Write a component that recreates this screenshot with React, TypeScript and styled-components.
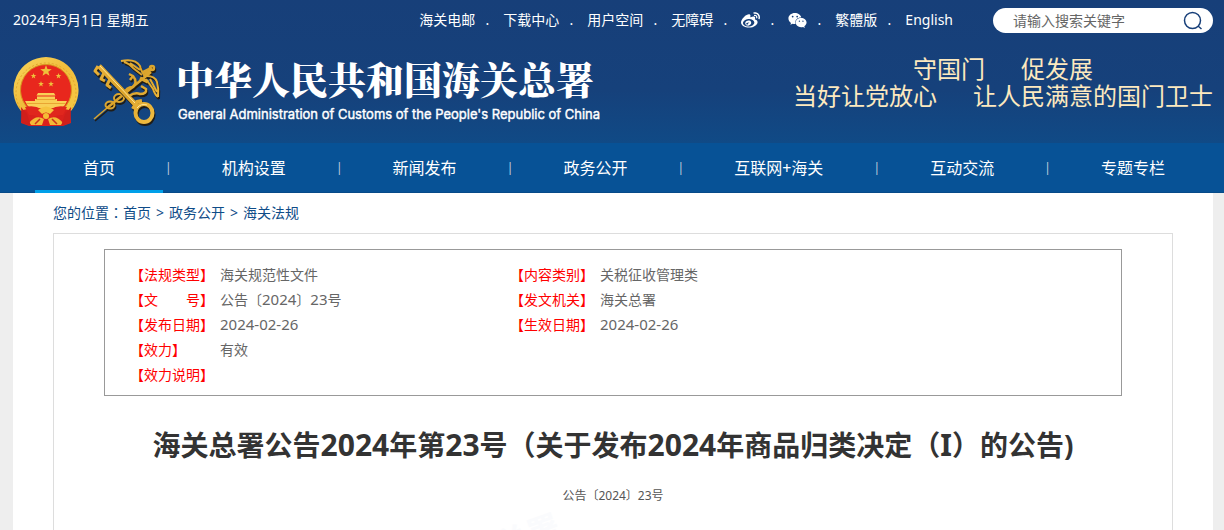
import React from "react";
import styled, { createGlobalStyle } from "styled-components";
import { FaWeibo, FaWeixin } from "react-icons/fa";

const GlobalStyle = createGlobalStyle`
  *, *::before, *::after { box-sizing: border-box; }
  body {
    margin: 0;
    background: #eeeeee;
    color: #666666;
    font-family: "Noto Sans", "Noto Sans CJK SC", sans-serif;
    font-size: 14px;
    line-height: 25px;
  }
  a { color: inherit; text-decoration: none; }
  ul, ol { list-style: none; margin: 0; padding: 0; }
`;

const Header = styled.header`
  height: 143px;
  padding: 8px 11px 0 13px;
  color: #ffffff;
  background: linear-gradient(#173f79 0, #16417b 90px, #104a86 143px);
`;

const TopBar = styled.div`
  display: flex;
  align-items: center;
  height: 25px;
`;

const Today = styled.span`
  margin-right: auto;
  line-height: 24px;
  padding-bottom: 2px;
`;

const QuickLinks = styled.ul`
  display: flex;
  align-items: center;
  margin-right: 40px;
  padding-bottom: 2px;
`;

const QuickItem = styled.li`
  display: flex;
  align-items: center;

  & + &::before {
    content: ".";
    width: 28px;
    padding-right: 4px;
    text-align: center;
  }

  svg { display: block; width: 19px; height: 19px; margin-top: 2px; }
`;

const SearchForm = styled.form`
  display: flex;
  align-items: center;
  width: 220px;
  height: 25px;
  padding: 0 10px 0 20px;
  border-radius: 13px;
  background: #ffffff;
`;

const SearchInput = styled.input`
  flex: 1;
  min-width: 0;
  height: 25px;
  padding: 0;
  border: 0;
  outline: 0;
  background: transparent;
  font: inherit;
  &::placeholder { color: #666666; opacity: 1; }
`;

const SearchButton = styled.button`
  display: flex;
  padding: 0;
  border: 0;
  background: transparent;
  color: #173f79;
  cursor: pointer;
`;

const Masthead = styled.div`
  display: flex;
  justify-content: space-between;
  align-items: flex-start;
  padding-top: 22px;
`;

const Brand = styled.a`
  display: flex;
  align-items: flex-end;
  gap: 14px;
`;

const BrandText = styled.span`
  display: flex;
  flex-direction: column;
`;

const BrandName = styled.span`
  font-family: "Noto Serif CJK SC", "Noto Sans CJK SC", serif;
  font-size: 38px;
  font-weight: 900;
  line-height: 46px;
`;

const BrandEnglish = styled.span`
  font-family: Inter, "Liberation Sans", sans-serif;
  font-size: 13px;
  font-weight: 400;
  line-height: 26px;
  padding-left: 2px;
  -webkit-text-stroke: 0.4px currentColor;
`;

const Slogan = styled.div`
  color: #fde9bf;
  font-size: 24px;
  line-height: 27px;
`;

const SloganLine = styled.div`
  display: flex;
  justify-content: center;
  gap: 36px;
`;

const Nav = styled.nav`
  height: 50px;
  padding: 0 11px 0 35px;
  border-bottom: 1px solid #064a88;
  background: #075296;
`;

const NavList = styled.ul`
  display: flex;
  justify-content: space-between;
`;

const NavSeparator = styled.li`
  color: #c3cfdd;
  font-size: 12px;
  line-height: 50px;
`;

const NavLink = styled.a<{ $active?: boolean }>`
  display: block;
  height: 50px;
  padding: 0 48px;
  border-bottom: 3px solid ${(p) => (p.$active ? "#00a0e9" : "transparent")};
  color: #ffffff;
  font-size: 16px;
  line-height: 50px;
`;

const Page = styled.main`
  margin: 0 11px 0 13px;
  padding: 0 40px;
  background: #ffffff;
`;

const Breadcrumb = styled.nav`
  padding: 7px 0 8px;
  color: #0f4c88;
`;

const Colon = styled.span`
  font-family: "Noto Sans CJK TC", sans-serif;
`;

const Crumb = styled.a`
  & + &::before {
    content: ">";
    margin: 0 5px;
  }
`;

const Article = styled.article`
  position: relative;
  min-height: 297px;
  padding: 15px 50px 0;
  border: 1px solid #dddddd;
  border-bottom: 0;
  overflow: hidden;
`;

const MetaBox = styled.div`
  padding: 12px 25px 8px;
  border: 1px solid #999999;
`;

const MetaTable = styled.table`
  width: 100%;
  border-collapse: collapse;
  table-layout: fixed;
`;

const MetaLabel = styled.th`
  width: 90px;
  height: 25px;
  padding: 0;
  color: #ff0000;
  font-weight: 400;
  text-align: left;
  white-space: pre;
`;

const MetaValue = styled.td<{ $wide?: boolean }>`
  width: ${(p) => (p.$wide ? "auto" : "290px")};
  padding: 0;
`;

const Digits = styled.span`
  font-size: 15px;
`;

const Title = styled.h1`
  margin: 28px 0 0;
  color: #333333;
  font-size: 28px;
  font-weight: 700;
  line-height: 42px;
  text-align: center;
  white-space: nowrap;
`;

const TitleDigits = styled.span`
  font-size: 30px;
`;

const DocNumber = styled.p`
  margin: 17px 0 0;
  color: #555555;
  font-size: 12px;
  text-align: center;
`;

const Watermark = styled.span`
  position: absolute;
  left: 380px;
  top: 292px;
  color: #fafbfd;
  font-size: 32px;
  font-weight: 700;
  line-height: 40px;
  transform: rotate(-20deg);
  pointer-events: none;
`;

const STAR = "0,-5 1.2,-1.6 4.8,-1.5 1.9,0.6 2.9,4 0,2 -2.9,4 -1.9,0.6 -4.8,-1.5 -1.2,-1.6";

const Emblem = () => (
  <svg width="66" height="70" viewBox="0 0 66 70" aria-hidden="true">
    <defs>
      <linearGradient id="ring" x1="0" y1="0" x2="1" y2="1">
        <stop offset="0" stopColor="#f9d65c" />
        <stop offset="0.5" stopColor="#f0bd3c" />
        <stop offset="1" stopColor="#f6c944" />
      </linearGradient>
    </defs>
    <path d="M9 46 L8 66 L16 69 H50 L58 66 L57 46 Z" fill="#d9201c" />
    <path d="M33 0 A33 33 0 0 1 58 54 Q50 50 44 54 H22 Q16 50 8 54 A33 33 0 0 1 33 0 Z" fill="url(#ring)" />
    <path d="M9 54 A30 30 0 1 1 57 54" fill="none" stroke="#e2a52f" strokeDasharray="2 2" />
    <path d="M16 52 A25.500 25.500 0 1 1 50 52 Z" fill="#e8271d" stroke="#d8941f" />
    <g fill="#efc03b">
      <polygon points={STAR} transform="translate(33 14) scale(1.2)" />
      <polygon points={STAR} transform="translate(20.500 19) scale(.6)" />
      <polygon points={STAR} transform="translate(45.500 19) scale(.6)" />
      <polygon points={STAR} transform="translate(28 27) scale(.6)" />
      <polygon points={STAR} transform="translate(38 27) scale(.6)" />
    </g>
    <path d="M25 36 H41 L42.500 38.500 H23.500 Z M24 39.500 H42 V42 H24 Z M22 42 H44 V44 H54 Q52 49 49 51 H17 Q14 49 12 44 H22 Z" fill="#f9cf55" />
    <path d="M23 42.500 H43 M13 46.500 H53" stroke="#e59a2b" strokeWidth=".8" />
    <path d="M12 50 Q22 48 28 52 L33 56 L38 52 Q44 48 54 50 L50 58 Q42 58 36 62 H30 Q24 58 16 58 Z" fill="#e0261d" />
    <path d="M25 53 Q33 46 41 53 L37 57 Q33 54 29 57 Z" fill="#f6c33e" />
    <circle cx="33" cy="59" r="3" fill="#f5bc35" />
    <path d="M16 66 Q23 57 31 62 L29 68 H18 Z M50 66 Q43 57 35 62 L37 68 H48 Z" fill="#f3b936" />
    <path d="M22 67 L27 62 M44 67 L39 62" stroke="#c9331b" strokeWidth="1.500" />
    <path d="M8 50 L14 57 L18 69 L9 66 Z M58 50 L52 57 L48 69 L57 66 Z" fill="#cf1f1b" />
  </svg>
);

const KeyDrawing = () => (
  <>
    <path d="M6 7 L42 45" strokeWidth="5" />
    <path d="M5 7 L2 12 L6 16 M11 14 L8 20 L12 22 M17 20 L14 26 L18 29" strokeWidth="3" />
    <ellipse cx="51" cy="54" rx="8.500" ry="9" strokeWidth="4" />
    <path d="M40 50 L44 43 L49 42" strokeWidth="4" />
  </>
);

const StaffDrawing = () => (
  <>
    <path d="M1 60 L14 49" strokeWidth="1.500" />
    <path d="M14 49 L58 13" strokeWidth="2.500" />
    <ellipse cx="17" cy="46" rx="4.500" ry="3.500" strokeWidth="2" />
    <ellipse cx="26" cy="39" rx="5" ry="4" strokeWidth="2" />
    <path d="M31 35 Q33 28 40 28 Q45 23 40 17 L36 15 M40 17 L37 21 M36 37 Q42 33 47 35 Q54 35 53 30 L48 27" strokeWidth="2.500" />
    <path d="M28 2 Q42 -1 47 7 Q48 13 53 17 M31 3 Q37 5 40 9 L49 16 M37 4 L47 11" strokeWidth="2" />
    <path d="M54 17 Q62 17 64 23 Q66 30 65 38 M65 38 Q62 36 60 30 L53 20 M64 33 L57 20" strokeWidth="2" />
    <path d="M47 19 L55 23 M49 14 L59 9 M51 18 L57 12" strokeWidth="3.500" />
    <circle cx="59" cy="9" r="2" strokeWidth="2.500" />
  </>
);

const CustomsKeys = () => (
  <svg width="69" height="68" viewBox="0 0 69 68" fill="none" strokeLinejoin="round" aria-hidden="true">
    <defs>
      <linearGradient id="gold" x1="0" y1="0" x2="66" y2="66" gradientUnits="userSpaceOnUse">
        <stop offset="0" stopColor="#eab23a" />
        <stop offset="0.5" stopColor="#dba42c" />
        <stop offset="1" stopColor="#f4c044" />
      </linearGradient>
    </defs>
    <g stroke="#201d17" transform="translate(1 2)"><StaffDrawing /></g>
    <g stroke="url(#gold)"><StaffDrawing /></g>
    <g stroke="#201d17" transform="translate(1 2)"><KeyDrawing /></g>
    <g stroke="url(#gold)"><KeyDrawing /></g>
    <path d="M7 7 L42 44 M44 49 Q48 44 54 46" stroke="#ffe69a" strokeWidth="1" />
  </svg>
);

const quickLinks: { label: string; icon?: React.ReactNode }[] = [
  { label: "海关电邮" },
  { label: "下载中心" },
  { label: "用户空间" },
  { label: "无障碍" },
  { label: "微博", icon: <FaWeibo /> },
  { label: "微信", icon: <FaWeixin /> },
  { label: "繁體版" },
  { label: "English" },
];

const sections = ["首页", "机构设置", "新闻发布", "政务公开", "互联网+海关", "互动交流", "专题专栏"];

const date = <Digits>2024-02-26</Digits>;
const docNumber = (
  <>公告〔<Digits>2024</Digits>〕<Digits>23</Digits>号</>
);

const metaRows: [string, React.ReactNode, string?, React.ReactNode?][] = [
  ["【法规类型】", "海关规范性文件", "【内容类别】", "关税征收管理类"],
  ["【文\u3000\u3000号】", docNumber, "【发文机关】", "海关总署"],
  ["【发布日期】", date, "【生效日期】", date],
  ["【效力】", "有效"],
  ["【效力说明】", ""],
];

export default function App() {
  return (
    <>
      <GlobalStyle />
      <Header>
        <TopBar>
          <Today>2024年3月1日 星期五</Today>
          <QuickLinks>
            {quickLinks.map(({ label, icon }) => (
              <QuickItem key={label}>
                <a href="#" aria-label={label}>{icon ?? label}</a>
              </QuickItem>
            ))}
          </QuickLinks>
          <SearchForm role="search">
            <SearchInput type="text" aria-label="搜索" placeholder="请输入搜索关键字" />
            <SearchButton type="button" aria-label="搜索">
              <svg width="20" height="20" viewBox="0 0 20 20" fill="none" stroke="currentColor" strokeWidth="1.500">
                <circle cx="9.500" cy="9.500" r="8" />
                <path d="M15 15 L18.500 18" />
              </svg>
            </SearchButton>
          </SearchForm>
        </TopBar>
        <Masthead>
          <Brand href="#">
            <Emblem />
            <CustomsKeys />
            <BrandText>
              <BrandName>中华人民共和国海关总署</BrandName>
              <BrandEnglish>General Administration of Customs of the People's Republic of China</BrandEnglish>
            </BrandText>
          </Brand>
          <Slogan>
            <SloganLine><span>守国门</span><span>促发展</span></SloganLine>
            <SloganLine><span>当好让党放心</span><span>让人民满意的国门卫士</span></SloganLine>
          </Slogan>
        </Masthead>
      </Header>
      <Nav>
        <NavList>
          {sections.map((name, i) => (
            <React.Fragment key={name}>
              {i > 0 && <NavSeparator aria-hidden="true">|</NavSeparator>}
              <li><NavLink href="#" $active={i === 0}>{name}</NavLink></li>
            </React.Fragment>
          ))}
        </NavList>
      </Nav>
      <Page>
        <Breadcrumb>
          您的位置<Colon>：</Colon>
          <Crumb href="#">首页</Crumb>
          <Crumb href="#">政务公开</Crumb>
          <Crumb href="#">海关法规</Crumb>
        </Breadcrumb>
        <Article>
          <Watermark aria-hidden="true">海关总署</Watermark>
          <MetaBox>
            <MetaTable>
              <tbody>
                {metaRows.map(([label, value, label2, value2]) => (
                  <tr key={label}>
                    <MetaLabel scope="row">{label}</MetaLabel>
                    <MetaValue>{value}</MetaValue>
                    {label2 && <MetaLabel scope="row">{label2}</MetaLabel>}
                    {label2 && <MetaValue $wide>{value2}</MetaValue>}
                  </tr>
                ))}
              </tbody>
            </MetaTable>
          </MetaBox>
          <Title>
            海关总署公告<TitleDigits>2024</TitleDigits>年第<TitleDigits>23</TitleDigits>号（关于发布
            <TitleDigits>2024</TitleDigits>年商品归类决定（<TitleDigits>I</TitleDigits>）的公告)
          </Title>
          <DocNumber>公告〔2024〕23号</DocNumber>
        </Article>
      </Page>
    </>
  );
}
